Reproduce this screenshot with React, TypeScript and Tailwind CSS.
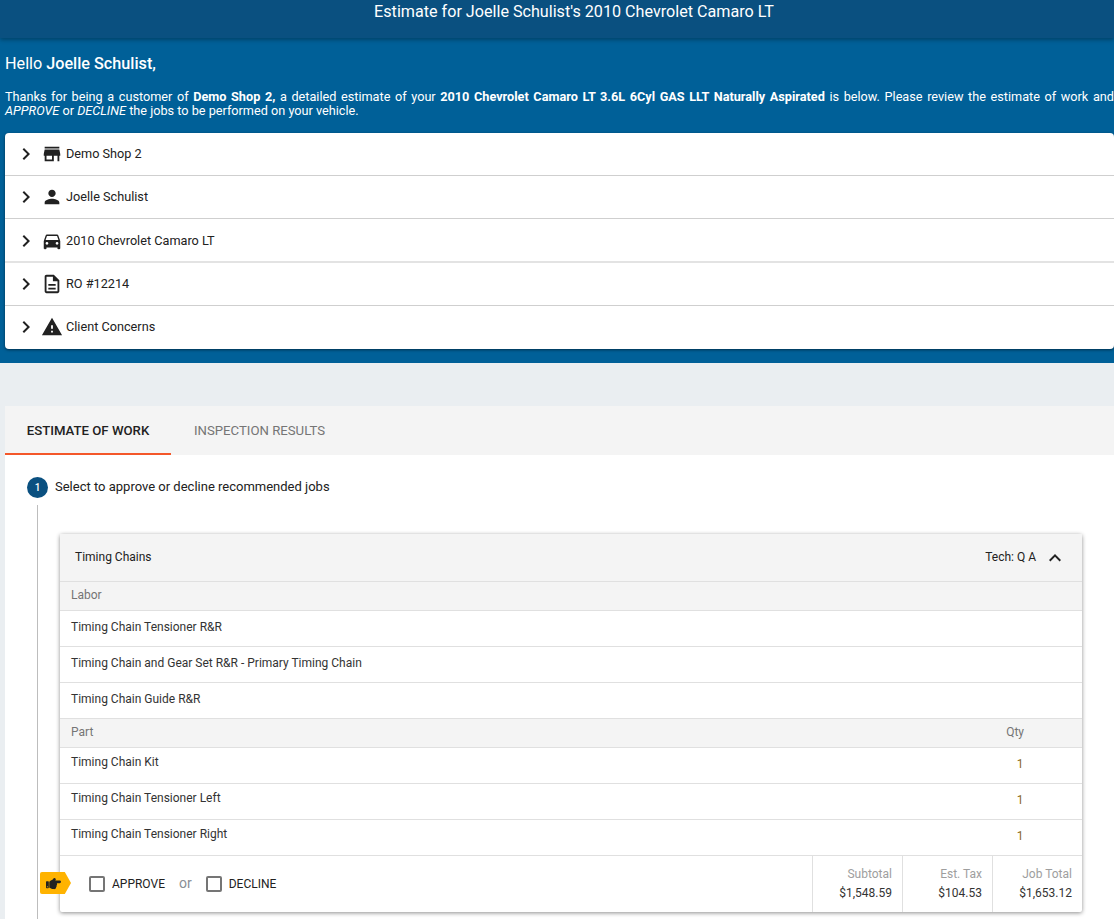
import { FaHandPointRight } from "react-icons/fa";
import {
  MdChevronRight,
  MdDirectionsCar,
  MdExpandLess,
  MdOutlineDescription,
  MdPerson,
  MdStore,
  MdWarning,
} from "react-icons/md";

const SECTIONS = [
  { label: "Demo Shop 2", icon: MdStore, row: "h-[43px] border-b border-[#cfcfcf]" },
  { label: "Joelle Schulist", icon: MdPerson, row: "h-[43px] border-b border-[#cfcfcf]" },
  { label: "2010 Chevrolet Camaro LT", icon: MdDirectionsCar, row: "h-[44px] border-b-2 border-[#e3e3e3] pt-[1px]" },
  { label: "RO #12214", icon: MdOutlineDescription, row: "h-[43px] border-b border-[#cfcfcf]" },
  { label: "Client Concerns", icon: MdWarning, row: "h-[43px] pb-[1px]" },
];

const LABOR = [
  "Timing Chain Tensioner R&R",
  "Timing Chain and Gear Set R&R - Primary Timing Chain",
  "Timing Chain Guide R&R",
];

const PARTS = ["Timing Chain Kit", "Timing Chain Tensioner Left", "Timing Chain Tensioner Right"];

const TOTALS = [
  { label: "Subtotal", value: "$1,548.59" },
  { label: "Est. Tax", value: "$104.53" },
  { label: "Job Total", value: "$1,653.12" },
];

const App = () => {
  return (
    <div className="h-[919px] overflow-hidden bg-[#eaeef1] font-['Roboto',sans-serif] text-[#212121]">
      <header className="relative z-10 h-[38px] bg-[#0a5080] pl-[34px] pt-[2px] text-center text-[16.15px] leading-[20px] text-white shadow-[0_2px_4px_rgba(0,0,0,0.3)]">
        Estimate for Joelle Schulist's 2010 Chevrolet Camaro LT
      </header>

      <section className="h-[325px] bg-[#006098] pl-[5px] pt-[16px] text-white">
        <p className="text-[16.2px] leading-[20px]">
          Hello <b className="font-medium">Joelle Schulist,</b>
        </p>
        <p className="mt-[16px] text-justify text-[12.7px] leading-[14px]">
          Thanks for being a customer of <b className="font-bold">Demo Shop 2,</b> a detailed estimate of your{" "}
          <b className="font-bold">2010 Chevrolet Camaro LT 3.6L 6Cyl GAS LLT Naturally Aspirated</b> is below. Please
          review the estimate of work and <i>APPROVE</i> or <i>DECLINE</i> the jobs to be performed on your vehicle.
        </p>

        <div className="mt-[15px] rounded-[4px] bg-white text-[#212121] shadow-[0_1px_3px_rgba(0,0,0,0.5)]">
          {SECTIONS.map((section) => (
            <div key={section.label} className={`flex items-center pl-[9px] text-[12.7px] ${section.row}`}>
              <MdChevronRight className="h-[24px] w-[24px] shrink-0 text-[#212121]" />
              <section.icon className="ml-[3px] h-[22px] w-[22px] shrink-0 text-[#212121]" />
              <span className="ml-[3px]">{section.label}</span>
            </div>
          ))}
        </div>
      </section>

      <main className="ml-[5px] mt-[43px] bg-white">
        <div className="flex h-[49px] bg-[#f4f4f4] text-[13.2px]">
          <div className="flex w-[166px] items-center justify-center border-b-2 border-[#f4572a] pt-[2px] font-[500] text-[#212121]">
            ESTIMATE OF WORK
          </div>
          <div className="flex w-[177px] items-center justify-center font-[450] text-[#757575]">INSPECTION RESULTS</div>
        </div>

        <div className="pl-[22px] pt-[22px]">
          <div className="flex h-[21px] items-center">
            <span className="flex h-[21px] w-[21px] items-center justify-center rounded-full bg-[#0a5080] text-[10px] font-medium text-white">
              1
            </span>
            <span className="ml-[7px] pb-[2px] text-[13px] font-[450] text-[#212121]">
              Select to approve or decline recommended jobs
            </span>
          </div>

          <div className="ml-[10px] mt-[7px] h-[414px] border-l border-[#bdbdbd] pl-[22px] pt-[29px]">
            <div className="relative h-[378px] w-[1022px] rounded-[2px] bg-white text-[12px] shadow-[0_1px_4px_rgba(0,0,0,0.45)]">
              <div className="flex h-[48px] items-center justify-between border-b border-[#e0e0e0] bg-[#f4f4f4] pl-[15px] pr-[15px]">
                <span className="pb-[2px]">Timing Chains</span>
                <div className="flex items-center">
                  <span className="pb-[2px]">Tech: Q A</span>
                  <MdExpandLess className="ml-[7px] h-[24px] w-[24px] text-[#212121]" />
                </div>
              </div>

              <div className="flex h-[29px] items-center border-b border-[#e0e0e0] bg-[#f4f4f4] pb-[2px] pl-[11px] text-[#757575]">
                Labor
              </div>
              {LABOR.map((job) => (
                <div
                  key={job}
                  className="flex h-[36px] items-center border-b border-[#e0e0e0] pb-[3px] pl-[11px] text-[#333]"
                >
                  {job}
                </div>
              ))}

              <div className="flex h-[29px] items-center justify-between border-b border-[#e0e0e0] bg-[#f4f4f4] pb-[2px] pl-[11px] pr-[58px] text-[#757575]">
                <span>Part</span>
                <span>Qty</span>
              </div>
              {PARTS.map((part) => (
                <div
                  key={part}
                  className="flex h-[36px] justify-between border-b border-[#e0e0e0] pl-[11px] pr-[53px] text-[#333]"
                >
                  <span className="pt-[5px]">{part}</span>
                  <span className="w-[18px] pt-[7px] text-center text-[#8a6a1f]">1</span>
                </div>
              ))}

              <div className="flex h-[56px]">
                <div className="flex flex-1 items-center pb-[1px] pl-[29px]">
                  <span className="h-[16px] w-[16px] rounded-[2px] border-2 border-[#757575]" />
                  <span className="ml-[7px] text-[#212121]">APPROVE</span>
                  <span className="ml-[14px] text-[14px] text-[#8a8f96]">or</span>
                  <span className="ml-[14px] h-[16px] w-[16px] rounded-[2px] border-2 border-[#757575]" />
                  <span className="ml-[7px] text-[#212121]">DECLINE</span>
                </div>
                {TOTALS.map((total) => (
                  <div
                    key={total.label}
                    className="flex w-[90px] flex-col items-end border-l border-[#e0e0e0] pr-[10px] pt-[9px] leading-[19px]"
                  >
                    <span className="text-[#9e9e9e]">{total.label}</span>
                    <span className="text-[#333]">{total.value}</span>
                  </div>
                ))}
              </div>

              <div className="absolute left-[-20px] top-[338px] flex h-[22px] w-[31px] items-center rounded-l-[2px] bg-[#ffb300] pl-[6px] [clip-path:polygon(0_0,80%_0,100%_50%,80%_100%,0_100%)]">
                <FaHandPointRight className="h-[15px] w-[15px] text-[#212121]" />
              </div>
            </div>
          </div>
        </div>
      </main>
    </div>
  );
};

export default App;
